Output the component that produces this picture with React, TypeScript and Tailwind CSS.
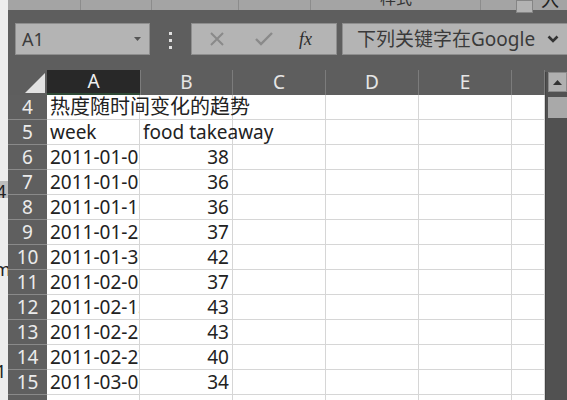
import React from "react";

const FONT = { fontFamily: '"Noto Sans", "Noto Sans CJK SC", sans-serif' };

const columns = [
  { key: "A", width: "w-[93px]" },
  { key: "B", width: "w-[93px]" },
  { key: "C", width: "w-[93px]" },
  { key: "D", width: "w-[93px]" },
  { key: "E", width: "w-[93px]" },
  { key: "", width: "w-[33px]" },
];

const data = [
  ["2011-01-02", 38],
  ["2011-01-09", 36],
  ["2011-01-16", 36],
  ["2011-01-23", 37],
  ["2011-01-30", 42],
  ["2011-02-06", 37],
  ["2011-02-13", 43],
  ["2011-02-20", 43],
  ["2011-02-27", 40],
  ["2011-03-06", 34],
] as const;

function RowHead({ n }: { n: number | string }) {
  return (
    <div className="w-[39px] h-[25px] shrink-0 bg-[#5f5f5f] border-b border-[#8a8a8a] flex items-center justify-center text-[19px] text-[#ebebeb]">
      {n}
    </div>
  );
}

function Cell({
  width,
  children,
  right,
  overflow,
}: {
  width: string;
  children?: React.ReactNode;
  right?: boolean;
  overflow?: boolean;
}) {
  return (
    <div
      className={`${width} h-[25px] shrink-0 bg-white border-r border-b border-[#d6d6d6] flex items-center text-[19px] text-[#222] whitespace-nowrap ${
        overflow ? "overflow-visible relative z-10" : "overflow-hidden"
      } ${right ? "justify-end pr-[3px]" : "pl-[3px]"}`}
    >
      {children}
    </div>
  );
}

function EmptyCells({ from }: { from: number }) {
  return (
    <>
      {columns.slice(from).map((c, i) => (
        <Cell key={i} width={c.width} />
      ))}
    </>
  );
}

export default function App() {
  return (
    <div className="w-[567px] h-[400px] overflow-hidden flex bg-[#5e5e5e]" style={FONT}>
      {/* edge of a window behind */}
      <div className="w-[8px] shrink-0 bg-[#ededed] flex flex-col overflow-hidden text-[#222] text-[18px] leading-none">
        <div className="h-[181px] shrink-0" />
        <div className="h-[17px] shrink-0 bg-[#bdbdbd] -ml-[4px] pt-[1px]">4</div>
        <div className="h-[62px] shrink-0" />
        <div className="-ml-[6px]">m</div>
        <div className="h-[84px] shrink-0" />
        <div className="-ml-[4px]">1</div>
      </div>

      <div className="flex-1 min-w-0 flex flex-col">
        {/* ribbon remnant */}
        <div className="h-[10px] shrink-0 bg-[#a4a4a4] flex">
          <div className="w-[73px] border-r border-[#8c8c8c]" />
          <div className="w-[71px] border-r border-[#8c8c8c]" />
          <div className="w-[87px] border-r border-[#8c8c8c]" />
          <div className="w-[72px] border-r border-[#8c8c8c]" />
          <div className="w-[170px] border-r border-[#8c8c8c] overflow-hidden">
            <div className="pl-[69px] -mt-[10px] text-[16px] leading-[16px] text-[#333]">样式</div>
          </div>
          <div className="w-[35px]" />
          <div className="w-[17px] h-[13px] bg-[#b3b3b3] border border-[#858585] relative z-10" />
          <div className="ml-[8px] overflow-hidden">
            <div className="-mt-[9px] text-[18px] leading-[18px] text-[#222]">入</div>
          </div>
        </div>

        {/* formula bar */}
        <div className="h-[60px] shrink-0 flex items-start pt-[13px]">
          <div className="ml-[7px] w-[135px] h-[32px] bg-[#b4b4b4] border border-[#8e8e8e] flex items-center pl-[6px] pr-[8px] text-[18px] text-[#3c3c3c]">
            <span className="flex-1">A1</span>
            <svg width="7" height="4" viewBox="0 0 7 4">
              <path d="M0 0h7L3.5 4z" fill="#555" />
            </svg>
          </div>
          <div className="ml-[19px] mt-[9px] flex flex-col gap-[4px]">
            <div className="w-[3px] h-[3px] bg-[#e0e0e0]" />
            <div className="w-[3px] h-[3px] bg-[#e0e0e0]" />
            <div className="w-[3px] h-[3px] bg-[#e0e0e0]" />
          </div>
          <div className="ml-[19px] w-[146px] h-[32px] bg-[#b4b4b4] border border-[#8e8e8e] flex items-center">
            <svg width="14" height="14" viewBox="0 0 14 14" className="ml-[18px]">
              <path d="M1 1l12 12M13 1L1 13" stroke="#8a8a8a" strokeWidth="2" />
            </svg>
            <svg width="18" height="14" viewBox="0 0 18 14" className="ml-[31px]">
              <path d="M1 7l5 5L17 1" stroke="#8a8a8a" strokeWidth="2.4" fill="none" />
            </svg>
            <span
              className="ml-[26px] text-[18px] italic text-[#2c2c2c]"
              style={{ fontFamily: '"Liberation Serif", serif' }}
            >
              fx
            </span>
          </div>
          <div className="ml-[5px] flex-1 h-[32px] bg-[#b4b4b4] border border-[#8e8e8e] border-r-0 flex items-center pl-[14px] text-[19px] text-[#3a3a3a]">
            <span className="flex-1 whitespace-nowrap">下列关键字在Google</span>
            <svg width="12" height="8" viewBox="0 0 12 8" className="mr-[8px]">
              <path d="M1.5 1.5L6 6l4.5-4.5" stroke="#333" strokeWidth="2.6" fill="none" />
            </svg>
          </div>
        </div>

        {/* sheet */}
        <div className="flex-1 flex min-h-0">
          <div className="flex-1 flex flex-col">
            <div className="h-[25px] shrink-0 flex">
              <div className="w-[39px] shrink-0 flex items-end justify-end pr-[2px] pb-[2px]">
                <svg width="20" height="20" viewBox="0 0 20 20">
                  <path d="M20 0V20H0z" fill="#e2e2e2" />
                </svg>
              </div>
              {columns.map((c, i) =>
                i === 0 ? (
                  <div
                    key={i}
                    className={`${c.width} shrink-0 bg-[#282828] border-b-2 border-[#2f4a36] flex items-center justify-center text-[19px] text-[#f0f0f0]`}
                  >
                    {c.key}
                  </div>
                ) : (
                  <div
                    key={i}
                    className={`${c.width} shrink-0 border-r border-[#7c7c7c] flex items-center justify-center text-[19px] text-[#e6e6e6] ${
                      i === 1 ? "border-l" : ""
                    }`}
                  >
                    {c.key}
                  </div>
                )
              )}
            </div>

            <div className="flex">
              <RowHead n={4} />
              <Cell width="w-[93px]" overflow>
                <span className="text-[20px]">热度随时间变化的趋势</span>
              </Cell>
              <EmptyCells from={1} />
            </div>
            <div className="flex">
              <RowHead n={5} />
              <Cell width="w-[93px]">week</Cell>
              <Cell width="w-[93px]" overflow>
                food takeaway
              </Cell>
              <EmptyCells from={2} />
            </div>
            {data.map(([d, v], i) => (
              <div className="flex" key={d}>
                <RowHead n={i + 6} />
                <Cell width="w-[93px]">{d}</Cell>
                <Cell width="w-[93px]" right>
                  {v}
                </Cell>
                <EmptyCells from={2} />
              </div>
            ))}
            <div className="flex">
              <RowHead n={16} />
              <EmptyCells from={0} />
            </div>
          </div>

          {/* vertical scrollbar */}
          <div className="w-[22px] shrink-0 flex flex-col">
            <div className="h-[2px] bg-[#5e5e5e]" />
            <div className="flex-1 bg-[#515151] border-l border-[#444] flex flex-col items-end">
              <div className="w-[19px] h-[20px] bg-[#b0b0b0] border border-[#8a8a8a] flex items-center justify-center">
                <svg width="9" height="5" viewBox="0 0 9 5">
                  <path d="M4.5 0L9 5H0z" fill="#333" />
                </svg>
              </div>
              <div className="w-[19px] h-[21px] mt-[5px] bg-[#a9a9a9]" />
            </div>
          </div>
        </div>
      </div>
    </div>
  );
}
